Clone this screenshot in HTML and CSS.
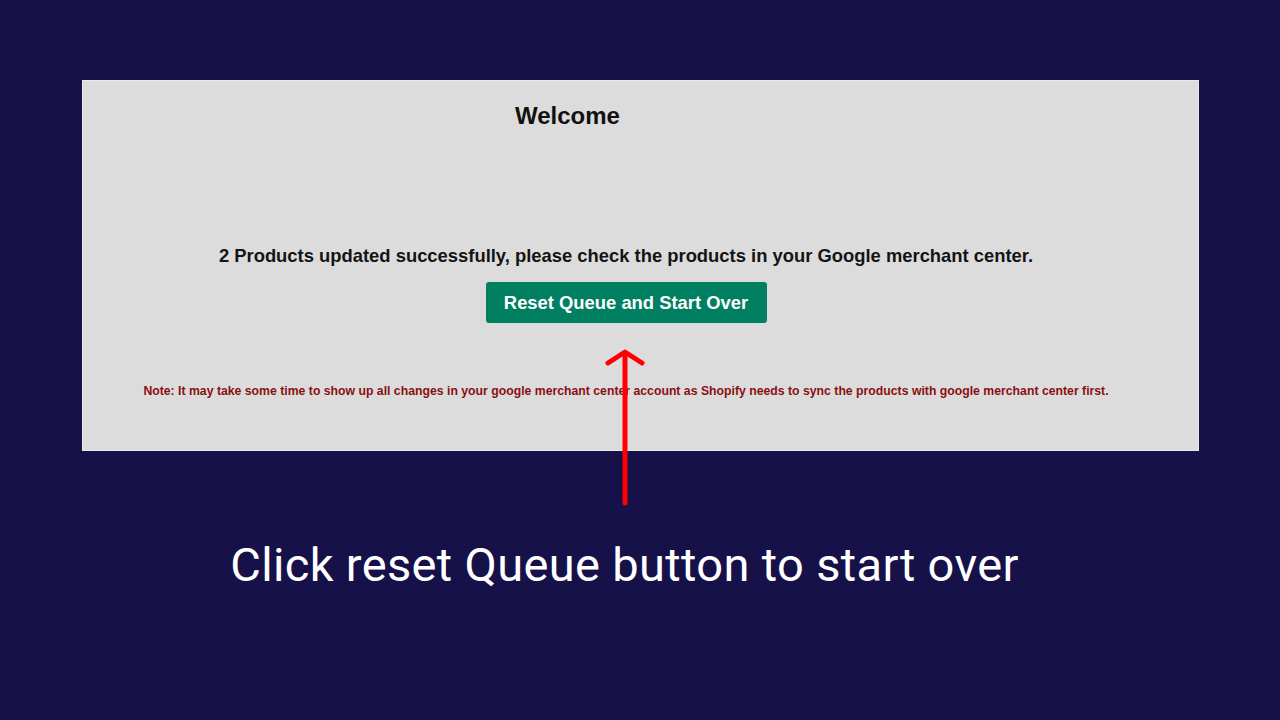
FILE: index.html
```html
<!DOCTYPE html>
<html>
    <head>
        <title>Reset Queue</title>
        <link rel="stylesheet" href="styles.css">
    </head>
    <body>
        <div class="stage">
            <div class="panel">
                <h2 class="welcomeHead">Welcome</h2>
                <div class="status">
                    <p class="message">2 Products updated successfully, please check the products in your Google merchant center.</p>
                    <button class="resetBtn" type="button">Reset Queue and Start Over</button>
                    <p class="note">Note: It may take some time to show up all changes in your google merchant center account as Shopify needs to sync the products with google merchant center first.</p>
                </div>
            </div>

            <svg class="arrow" width="44" height="164" viewBox="0 0 44 164">
                <line x1="22" y1="6" x2="22" y2="156" stroke="#ff0000" stroke-width="5" stroke-linecap="round" />
                <polyline points="5,16 22,5 39,16" fill="none" stroke="#ff0000" stroke-width="5" stroke-linecap="round" stroke-linejoin="round" />
            </svg>

            <p class="caption">Click reset Queue button to start over</p>
        </div>
    </body>
</html>
```

FILE: styles.css
```css
* {
    box-sizing: border-box;
    margin: 0;
    padding: 0;
}

body {
    background: #17114a;
    width: 1280px;
    height: 720px;
    overflow: hidden;
    font-family: "Liberation Sans", Arial, sans-serif;
}

.stage {
    position: relative;
    padding-top: 80px;
}

.panel {
    margin-left: 82px;
    width: 1117px;
    height: 371px;
    background: #dcdcdc;
    border: 1px solid #e9e9ea;
    padding: 21px 29px 0 0;
}

.welcomeHead {
    font-size: 24px;
    line-height: 28px;
    font-weight: bold;
    color: #111111;
    padding-left: 432px;
}

.status {
    display: flex;
    flex-direction: column;
    align-items: center;
    padding-top: 115px;
}

.message {
    font-size: 18.4px;
    line-height: 22px;
    font-weight: bold;
    color: #141414;
}

.resetBtn {
    margin-top: 15px;
    width: 281px;
    height: 41px;
    background: #008060;
    color: #ffffff;
    border: none;
    border-radius: 3px;
    font-family: "Liberation Sans", Arial, sans-serif;
    font-size: 18.4px;
    font-weight: bold;
    cursor: pointer;
}

.note {
    margin-top: 60px;
    font-size: 12.25px;
    line-height: 16px;
    font-weight: bold;
    color: #8a0f10;
}

.arrow {
    position: absolute;
    left: 603px;
    top: 347px;
}

.caption {
    margin-top: 88px;
    padding-right: 31px;
    text-align: center;
    font-family: Roboto, sans-serif;
    font-size: 47px;
    letter-spacing: 0.35px;
    line-height: 52px;
    color: #ffffff;
}
```
